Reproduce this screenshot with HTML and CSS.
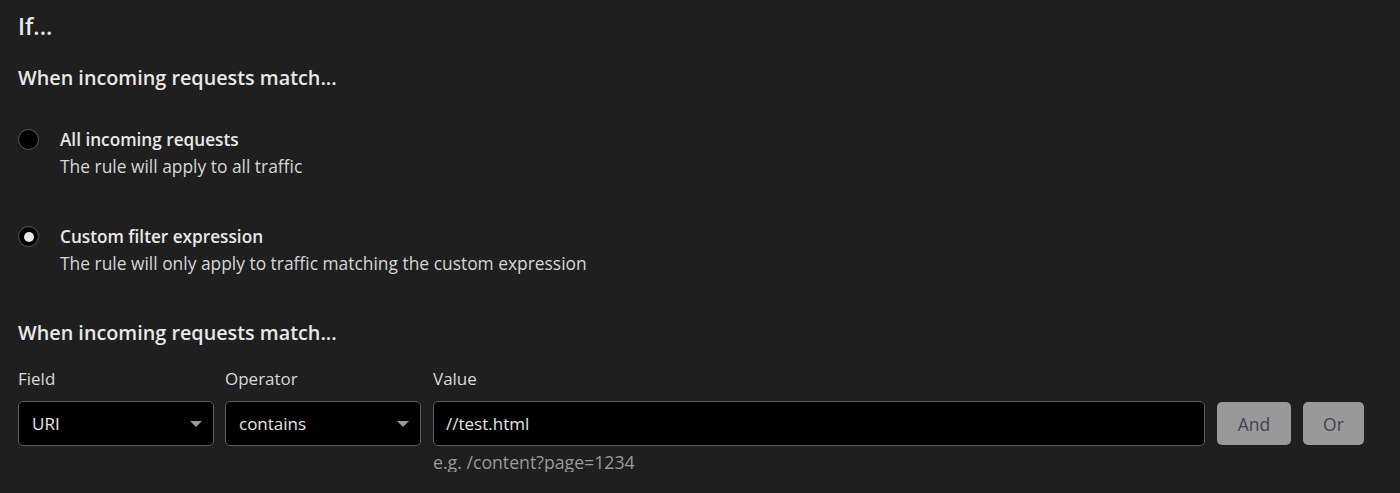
FILE: index.html
```html
<!DOCTYPE html>
<html>
<head>
<meta charset="utf-8">
<link rel="stylesheet" href="styles.css">
</head>
<body>
<div class="page">
  <h1 class="title">If...</h1>
  <h2 class="subtitle">When incoming requests match...</h2>
  <div class="options">
    <label class="option">
      <span class="radio"></span>
      <span class="option-text">
        <span class="option-title">All incoming requests</span>
        <span class="option-desc">The rule will apply to all traffic</span>
      </span>
    </label>
    <label class="option">
      <span class="radio checked"></span>
      <span class="option-text">
        <span class="option-title">Custom filter expression</span>
        <span class="option-desc">The rule will only apply to traffic matching the custom expression</span>
      </span>
    </label>
  </div>
  <h2 class="subtitle second">When incoming requests match...</h2>
  <div class="expr">
    <div class="col col-field">
      <div class="label">Field</div>
      <div class="select"><span>URI</span><span class="caret"></span></div>
    </div>
    <div class="col col-op">
      <div class="label">Operator</div>
      <div class="select"><span>contains</span><span class="caret"></span></div>
    </div>
    <div class="col col-value">
      <div class="label">Value</div>
      <div class="input">//test.html</div>
      <div class="hint">e.g. /content?page=1234</div>
    </div>
    <div class="col col-btn">
      <div class="label">&nbsp;</div>
      <div class="btns">
        <button class="btn btn-and">And</button>
        <button class="btn btn-or">Or</button>
      </div>
    </div>
  </div>
</div>
</body>
</html>
```
FILE: styles.css
```css
html, body {
  margin: 0;
  padding: 0;
  background: #1f1f1f;
}
body {
  font-family: "Open Sans", "Noto Sans", sans-serif;
  color: #d9d9d9;
}
.page {
  padding: 0 18px;
}
.title {
  margin: 10px 0 0;
  font-size: 23px;
  line-height: 32px;
  font-weight: 600;
  color: #e8e8e8;
}
.subtitle {
  margin: 24px 0 0;
  font-size: 19.8px;
  line-height: 24px;
  font-weight: 600;
  color: #e8e8e8;
}
.subtitle.second {
  margin-top: 44px;
}
.options {
  margin-top: 36px;
  display: flex;
  flex-direction: column;
  gap: 43px;
}
.option {
  display: flex;
  align-items: flex-start;
}
.radio {
  box-sizing: border-box;
  width: 21px;
  height: 21px;
  margin-top: 3px;
  border-radius: 50%;
  border: 1.5px solid #5a5a5a;
  background: #000;
  display: flex;
  align-items: center;
  justify-content: center;
  flex: none;
}
.radio.checked::after {
  content: "";
  width: 10px;
  height: 10px;
  border-radius: 50%;
  background: #e6e6e6;
}
.option-text {
  margin-left: 21px;
  display: flex;
  flex-direction: column;
}
.option-title {
  font-size: 17.2px;
  line-height: 27px;
  font-weight: 600;
  color: #e8e8e8;
}
.option-desc {
  font-size: 17.4px;
  line-height: 27px;
  color: #d6d6d6;
}
.expr {
  margin-top: 23px;
  display: flex;
  align-items: flex-start;
}
.col-field, .col-op {
  width: 196px;
  margin-right: 11px;
}
.col-op { margin-right: 12px; }
.col-value {
  width: 772px;
  margin-right: 12px;
}
.label {
  font-size: 17px;
  line-height: 22px;
  color: #d9d9d9;
  margin-bottom: 11px;
}
.select, .input {
  box-sizing: border-box;
  height: 45px;
  background: #000;
  border: 1px solid #5c5c5c;
  border-radius: 5px;
  font-size: 17px;
  color: #e6e6e6;
  display: flex;
  align-items: center;
}
.select {
  padding: 0 11px 0 13px;
  justify-content: space-between;
}
.input {
  padding: 0 12px;
}
.caret {
  width: 0;
  height: 0;
  border-left: 6px solid transparent;
  border-right: 6px solid transparent;
  border-top: 6px solid #9a9a9a;
}
.hint {
  margin-top: 6px;
  font-size: 17.7px;
  line-height: 20px;
  color: #9a9a9a;
}
.btns {
  display: flex;
  gap: 12px;
  padding-top: 1px;
}
.btn {
  box-sizing: border-box;
  height: 43px;
  border: none;
  border-radius: 5px;
  background: #999999;
  color: #3f4552;
  font-family: inherit;
  font-size: 17.5px;
  padding: 0;
}
.btn-and { width: 74px; }
.btn-or { width: 61px; }
```
